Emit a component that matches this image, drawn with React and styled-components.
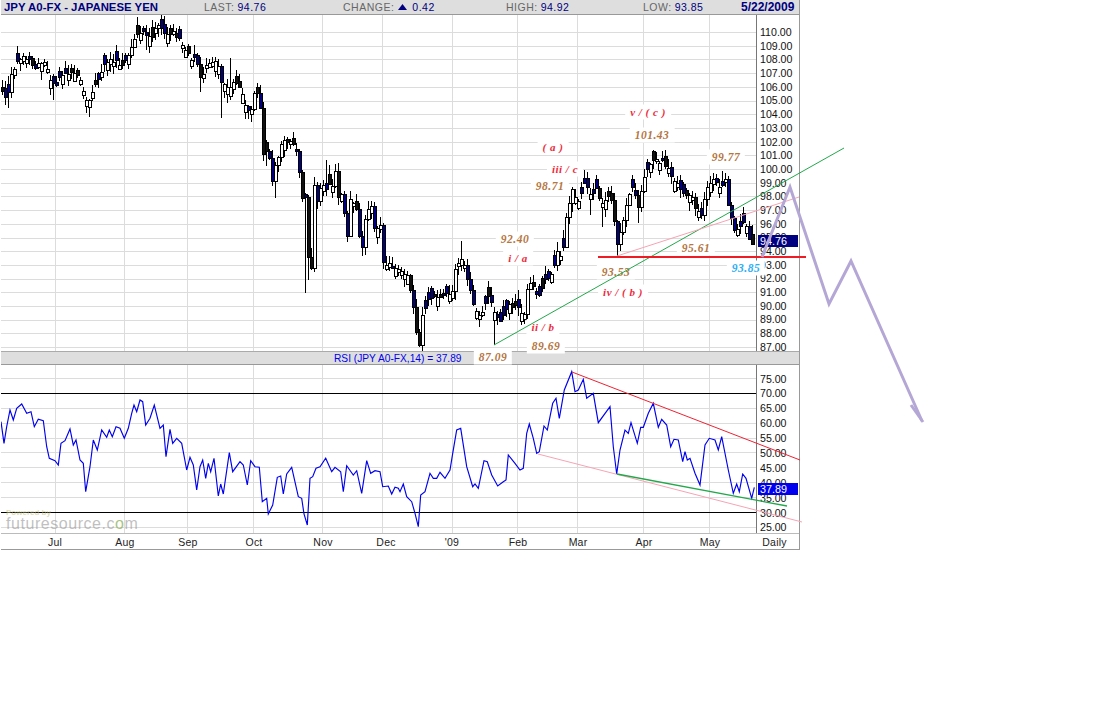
import React from "react";
import styled, { createGlobalStyle } from "styled-components";

const GlobalStyle = createGlobalStyle`
  html, body { margin: 0; padding: 0; background: #fff; }
  body { font-family: "Liberation Sans", Arial, sans-serif; }
`;

const Page = styled.div`
  position: relative;
  width: 1096px;
  height: 703px;
  overflow: hidden;
  background: #fff;
`;
const Frame = styled.div`
  display: flex;
  flex-direction: column;
  width: 799px;
  margin-left: 1px;
  box-sizing: border-box;
  border-right: 1px solid #999;
  border-bottom: 1px solid #999;
`;
const Header = styled.header`
  display: flex;
  align-items: center;
  height: 15px;
  box-sizing: border-box;
  background: #dedede;
  border-bottom: 1px solid #999;
  padding-left: 3px;
`;
const Title = styled.div`
  width: 200px;
  color: #000080;
  font-weight: 700;
  font-size: 11.4px;
  white-space: nowrap;
`;
const Stat = styled.div`
  width: ${(p) => p.$w}px;
  display: flex;
  align-items: center;
  gap: 3px;
  font-size: 10.5px;
  letter-spacing: 0.5px;
  white-space: nowrap;
`;
const StatLabel = styled.span`
  color: #666;
`;
const StatValue = styled.span`
  color: #000080;
`;
const UpArrow = styled.svg`
  width: 9px;
  height: 6px;
  margin: 0 2px 0 1px;
`;
const DateText = styled.div`
  color: #000080;
  font-weight: 700;
  font-size: 12px;
  white-space: nowrap;
`;
const PricePanel = styled.section`
  display: flex;
  height: 336px;
`;
const Plot = styled.svg`
  display: block;
  width: 755px;
  flex: none;
`;
const Axis = styled.div`
  flex: 1;
  height: 100%;
  box-sizing: border-box;
  border-left: 1px solid #777;
  padding: ${(p) => p.$top}px 0 0 3px;
`;
const AxisLabel = styled.div`
  height: ${(p) => p.$h}px;
  line-height: ${(p) => p.$h}px;
  font-size: 10.6px;
  color: #111;
`;
const SubHeader = styled.div`
  position: relative;
  height: 14px;
  box-sizing: border-box;
  background: #dedede;
  border-top: 1px solid #aaa;
  border-bottom: 1px solid #999;
  display: flex;
  align-items: center;
  padding-left: 333px;
  color: #0000ee;
  font-size: 10.2px;
  white-space: nowrap;
`;
const RsiPanel = styled(PricePanel)`
  height: 169px;
  border-bottom: 1px solid #bbb;
  box-sizing: border-box;
`;
const Footer = styled.footer`
  display: flex;
  height: 15px;
  align-items: center;
`;
const Month = styled.div`
  width: ${(p) => p.$w}px;
  text-align: center;
  font-size: 10.5px;
  color: #222;
  letter-spacing: 0.2px;
`;
const PriceTag = styled.div`
  position: absolute;
  z-index: 1;
  left: 758px;
  top: ${(p) => p.$top}px;
  width: 40px;
  height: 12px;
  line-height: 12px;
  background: ${(p) => p.$bg};
  color: #fff;
  font-size: 10.8px;
  padding-left: 2px;
  box-sizing: border-box;
`;
const Note = styled.span`
  position: absolute;
  z-index: 1;
  left: ${(p) => p.$x}px;
  top: ${(p) => p.$y}px;
  transform: translate(-50%, -50%);
  padding: 1px 5px;
  background: #fff;
  font-family: "Liberation Serif", "Times New Roman", serif;
  font-style: italic;
  font-weight: 700;
  font-size: ${(p) => p.$size || 11.5}px;
  letter-spacing: 0.5px;
  line-height: 13px;
  white-space: pre;
  color: ${(p) => p.$color};
`;
const Watermark = styled.div`
  position: absolute;
  z-index: 1;
  left: 6px;
  top: 510px;
  color: rgba(150, 150, 150, 0.6);
`;
const WatermarkTop = styled.div`
  font-size: 8px;
  line-height: 6px;
  color: rgba(190, 190, 120, 0.55);
  font-weight: 700;
`;
const WatermarkBrand = styled.div`
  font-size: 16px;
  line-height: 15px;
  letter-spacing: 0.55px;
`;
const BrandDot = styled.span`
  color: rgba(140, 175, 90, 0.75);
`;
const Overlay = styled.svg`
  position: absolute;
  z-index: 2;
  left: 0;
  top: 0;
  pointer-events: none;
`;

const pricePts = [[2,92],[6,100],[9,85],[12,72],[16,62],[20,58],[25,58],[30,60],[35,66],[40,62],[45,60],[48,72],[52,84],[55,85],[60,78],[65,75],[70,70],[75,72],[80,80],[84,92],[88,104],[92,92],[97,80],[100,74],[106,62],[112,60],[118,64],[124,62],[128,56],[133,38],[138,32],[142,30],[148,36],[153,34],[158,25],[164,32],[170,36],[174,32],[180,40],[186,52],[191,58],[196,60],[200,76],[204,72],[208,62],[212,62],[218,65],[222,85],[228,90],[232,84],[236,82],[240,88],[246,106],[250,112],[254,95],[259,96],[263,152],[268,147],[272,180],[277,158],[283,140],[288,142],[295,147],[298,163],[301,198],[305,197],[307,247],[309,270],[312,267],[314,187],[318,205],[320,187],[326,187],[330,180],[331,192],[335,172],[337,198],[342,195],[347,238],[350,200],[356,210],[361,256],[366,208],[371,207],[375,233],[380,225],[383,263],[390,263],[395,270],[400,270],[406,273],[412,298],[417,343],[419,343],[422,313],[430,296],[443,296],[452,293],[455,270],[462,255],[467,277],[472,300],[480,317],[488,297],[495,312],[500,322],[508,303],[517,308],[525,313],[528,280],[535,287],[538,300],[545,280],[553,273],[557,250],[562,260],[566,217],[572,190],[577,202],[585,182],[590,193],[597,187],[600,207],[610,190],[615,227],[617,245],[622,225],[627,198],[633,187],[638,205],[645,173],[650,163],[655,160],[663,163],[670,173],[675,180],[683,193],[690,193],[697,212],[702,217],[705,190],[712,180],[720,188],[725,180],[728,205],[733,230],[738,230],[745,220],[748,238],[753,245]];

const extremes = [[304,293],[307,280],[274,198],[460,241],[418,345],[421,345],[494,345],[652,150],[586,172],[721,171],[602,227],[589,215],[637,223],[755,254],[154,23],[229,58],[88,117],[221,118],[250,116],[52,100],[199,92],[7,108],[147,50],[327,160],[617,256],[570,208],[265,166]];

const interp = (x) => {
  for (let i = 1; i < pricePts.length; i++) {
    if (x <= pricePts[i][0]) {
      const [a, b] = pricePts[i - 1];
      const [c, d] = pricePts[i];
      return b + ((d - b) * (x - a)) / Math.max(c - a, 1);
    }
  }
  return pricePts[pricePts.length - 1][1];
};

let seed = 20090522;
const rnd = () => {
  seed = (seed * 1664525 + 1013904223) % 4294967296;
  return seed / 4294967296;
};

const candles = [];
{
  let prev = interp(2);
  for (let x = 2; x <= 753; x += 3) {
    const target = interp(x);
    const big = Math.abs(target - prev) > 9;
    const close = Math.round(target + (rnd() - 0.5) * 5);
    const span = 2 + rnd() * 8;
    const open = Math.round(big ? prev : close + (rnd() < 0.5 ? -span : span));
    let top = Math.min(open, close) - Math.round(rnd() * 8) - 1;
    let bottom = Math.max(open, close) + Math.round(rnd() * 8) + 1;
    extremes.forEach(([ex, ey]) => {
      if (Math.abs(ex - x) <= 1) {
        if (ey < top) top = ey;
        if (ey > bottom) bottom = ey;
      }
    });
    const dark = rnd() < 0.35;
    candles.push({ x, open, close, top, bottom, down: close > open, dark });
    prev = close;
  }
}

const gridX = [55, 124, 187, 253, 322, 382, 452, 517, 577, 643, 709];
const priceGridY = Array.from({ length: 24 }, (_, i) => Math.round(32 + 13.7 * i));
const rsiGridY = [378, 408, 423, 438, 452, 467, 482, 497, 527];
const prices = Array.from({ length: 24 }, (_, i) => (110 - i).toFixed(2));
const rsiLabels = ["75.00","70.00","65.00","60.00","55.00","50.00","45.00","40.00","35.00","30.00","25.00"];

const rsiA = [3,215,12,280,20,230,30,180,40,210,50,175,65,162,80,190,93,185,103,230,115,208,130,212,140,290,148,325,165,332,175,345,183,280,195,272,210,237,220,285,228,270,240,330,250,340,257,425,270,350,280,270,292,300,305,240,320,262,328,240,337,260,348,230,360,235,373,265,385,235,395,190,402,165,410,185,420,150,428,155,437,225,450,205,463,165,480,235,490,225,498,320,510,238,518,280,530,265,545,280,560,360,570,322,580,345,590,420,600,350,608,330,617,385,625,340,632,365,642,325,655,438,662,402,670,432,688,308,698,365,720,335,730,345,742,405,752,332,765,350,778,352,787,455,800,445,805,492,818,465,832,382,842,378,850,432,860,372,875,352,895,440,905,445,912,492,922,525,930,385,938,380,948,355,960,350,977,325,995,365,1005,352,1022,365,1030,425,1040,347,1060,375,1070,362,1085,430,1100,332,1112,370,1125,362,1140,365,1148,410,1165,408,1175,432,1185,412,1195,415];
const rsiB = [0,425,10,402,20,440,35,455,45,490,55,530,62,435,75,425,90,370,100,385,110,385,120,367,135,385,150,360,158,310,170,240,182,235,200,350,218,410,225,402,235,415,252,332,262,335,275,375,293,408,310,395,318,390,325,315,345,340,360,360,370,355,380,250,388,222,400,265,410,310,418,305,432,228,442,240,458,160,468,145,478,205,493,120,515,65,525,125,535,120,550,88,560,145,580,130,595,218,630,170,640,290,650,372,660,300,675,240,685,250,693,218,712,280,722,232,730,232,745,190,760,160,775,232,785,208,800,225,812,290,822,268,835,270,848,335,855,305,862,330,870,325,885,370,900,405,915,285,928,265,945,270,955,300,965,260,985,360,1000,430,1010,402,1018,425,1028,372,1038,385,1055,445,1063,412];

const toPoints = (arr, ox) => {
  const out = [];
  for (let i = 0; i < arr.length; i += 2) {
    out.push(`${(ox + arr[i] / 3).toFixed(1)},${(350 + arr[i + 1] / 3).toFixed(1)}`);
  }
  return out.join(" ");
};
const rsiPoints = `${toPoints(rsiA, 0)} ${toPoints(rsiB, 400)}`;

const months = [["Jul",108],["Aug",32],["Sep",94],["Oct",38],["Nov",100],["Dec",26],["'09",106],["Feb",26],["Mar",94],["Apr",38],["May",94],["Daily",35]];

const BROWN = "#b5763f";
const RED = "#ee2a3c";
const notes = [
  ["v / ( c )", 648, 112, RED, 11],
  ["101.43", 652, 135, BROWN],
  ["( a )", 553, 147, RED, 11],
  ["iii / c", 565, 169, RED, 11],
  ["98.71", 550, 186, BROWN],
  ["99.77", 726, 157, BROWN],
  ["92.40", 515, 239, BROWN],
  ["i / a", 518, 258, RED, 11],
  ["95.61", 696, 248, BROWN],
  ["93.53", 616, 272, BROWN],
  ["93.85", 746, 268, "#2aaef5"],
  ["iv / ( b )", 623, 292, RED, 11],
  ["ii / b", 543, 327, RED, 11],
  ["89.69", 546, 346, BROWN],
  ["87.09", 493, 357, BROWN],
];

const GridLines = ({ ys, y0, y1 }) => (
  <g stroke="#dcdcdc" strokeWidth="1" shapeRendering="crispEdges">
    {ys.map((y) => (
      <line key={y} x1="1" x2="756" y1={y + 0.5} y2={y + 0.5} />
    ))}
    {gridX.map((x) => (
      <line key={x} x1={x + 0.5} x2={x + 0.5} y1={y0} y2={y1} />
    ))}
  </g>
);

export default function App() {
  return (
    <Page>
      <GlobalStyle />
      <Frame>
        <Header>
          <Title>JPY A0-FX - JAPANESE YEN</Title>
          <Stat $w={139}>
            <StatLabel>LAST:</StatLabel>
            <StatValue>94.76</StatValue>
          </Stat>
          <Stat $w={163}>
            <StatLabel>CHANGE:</StatLabel>
            <UpArrow viewBox="0 0 9 6">
              <path d="M4.5 0 L9 6 L0 6 Z" fill="#000080" />
            </UpArrow>
            <StatValue>0.42</StatValue>
          </Stat>
          <Stat $w={137}>
            <StatLabel>HIGH:</StatLabel>
            <StatValue>94.92</StatValue>
          </Stat>
          <Stat $w={98}>
            <StatLabel>LOW:</StatLabel>
            <StatValue>93.85</StatValue>
          </Stat>
          <DateText>5/22/2009</DateText>
        </Header>

        <PricePanel>
          <Plot viewBox="1 15 755 336" height="336">
            <GridLines ys={priceGridY} y0={15} y1={351} />
            <g shapeRendering="crispEdges">
              {candles.map((c) => (
                <g key={c.x}>
                  <line x1={c.x + 0.5} x2={c.x + 0.5} y1={c.top} y2={c.bottom} stroke="#000" />
                  <rect
                    x={c.x - 0.5}
                    y={Math.min(c.open, c.close) + 0.5}
                    width="2.5"
                    height={Math.max(Math.abs(c.close - c.open), 1)}
                    fill={c.down ? (c.dark ? "#111" : "#000080") : "#fff"}
                    stroke="#000"
                  />
                </g>
              ))}
            </g>
          </Plot>
          <Axis $top={11}>
            {prices.map((p) => (
              <AxisLabel key={p} $h={13.7}>{p}</AxisLabel>
            ))}
          </Axis>
        </PricePanel>

        <SubHeader>RSI (JPY A0-FX,14) = 37.89</SubHeader>

        <RsiPanel>
          <Plot viewBox="1 365 755 168" height="168">
            <GridLines ys={rsiGridY} y0={365} y1={533} />
            <g stroke="#000" shapeRendering="crispEdges">
              <line x1="1" x2="756" y1="393.5" y2="393.5" />
              <line x1="1" x2="756" y1="512.5" y2="512.5" />
            </g>
            <polyline points={rsiPoints} fill="none" stroke="#0000ee" strokeWidth="1.15" />
          </Plot>
          <Axis $top={6.5}>
            {rsiLabels.map((p) => (
              <AxisLabel key={p} $h={14.9}>{p}</AxisLabel>
            ))}
          </Axis>
        </RsiPanel>

        <Footer>
          {months.map(([m, w]) => (
            <Month key={m} $w={w}>{m}</Month>
          ))}
        </Footer>
      </Frame>

      <PriceTag $top={235} $bg="#000080">94.76</PriceTag>
      <PriceTag $top={483} $bg="#0000ee">37.89</PriceTag>

      <Watermark>
        <WatermarkTop>Powered by</WatermarkTop>
        <WatermarkBrand>futuresource.c<BrandDot>o</BrandDot>m</WatermarkBrand>
      </Watermark>

      {notes.map(([text, x, y, color, size]) => (
        <Note key={text} $x={x} $y={y} $color={color} $size={size}>{text}</Note>
      ))}

      <Overlay width="1096" height="703" viewBox="0 0 1096 703">
        <line x1="494" y1="345" x2="844" y2="148" stroke="#22a84a" strokeWidth="1" />
        <line x1="617" y1="256" x2="799" y2="197" stroke="#f7a3b4" strokeWidth="1" />
        <line x1="598" y1="257" x2="806" y2="257" stroke="#ee1c25" strokeWidth="2" />
        <polyline points="762,257 790,187 829,304 851,261 922,421" fill="none" stroke="#b4a7d6" strokeWidth="3" />
        <line x1="911" y1="405" x2="923" y2="422" stroke="#b4a7d6" strokeWidth="3" />
        <line x1="572" y1="372" x2="800" y2="460" stroke="#ee2233" strokeWidth="1" />
        <line x1="538" y1="454" x2="802" y2="522" stroke="#f7a3b4" strokeWidth="1" />
        <line x1="617" y1="474" x2="787" y2="506" stroke="#22a84a" strokeWidth="1.3" />
      </Overlay>
    </Page>
  );
}
